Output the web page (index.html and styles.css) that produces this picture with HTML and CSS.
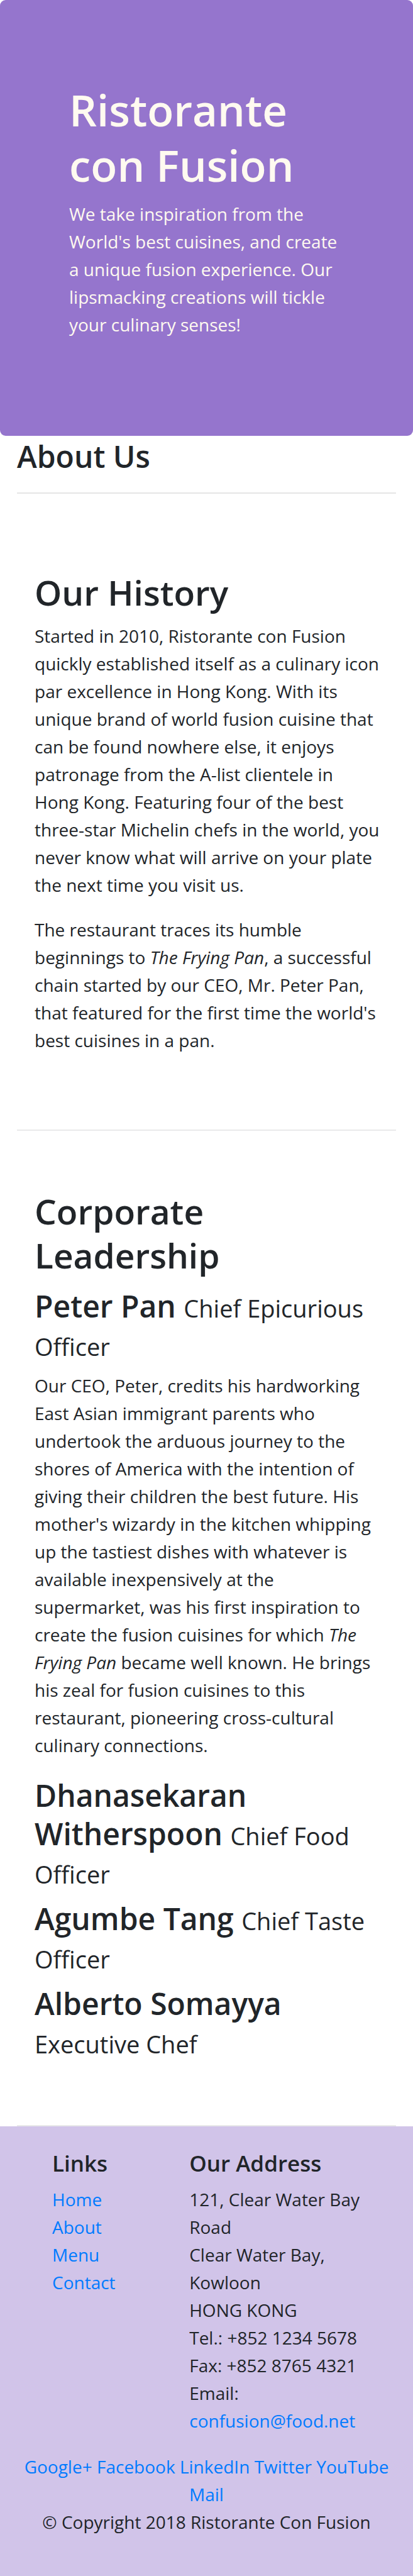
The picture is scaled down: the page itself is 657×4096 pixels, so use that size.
FILE: index.html
```html
<!DOCTYPE html>
<html lang="en">
<head>
<meta charset="utf-8">
<meta name="viewport" content="width=device-width, initial-scale=1">
<title>Ristorante Con Fusion: About Us</title>
<link rel="stylesheet" href="styles.css">
</head>
<body>
<header class="jumbotron">
  <h1>Ristorante con Fusion</h1>
  <p>We take inspiration from the World's best cuisines, and create a unique fusion experience. Our lipsmacking creations will tickle your culinary senses!</p>
</header>
<main class="container">
  <h3 class="page-title">About Us</h3>
  <section class="row-content">
    <h2>Our History</h2>
    <p>Started in 2010, Ristorante con Fusion quickly established itself as a culinary icon par excellence in Hong&nbsp;Kong. With its unique brand of world fusion cuisine that can be found nowhere else, it enjoys patronage from the A-list clientele in Hong&nbsp;Kong. Featuring four of the best three-star Michelin chefs in the world, you never know what will arrive on your plate the next time you visit us.</p>
    <p>The restaurant traces its humble beginnings to <em>The Frying Pan</em>, a successful chain started by our CEO, Mr. Peter Pan, that featured for the first time the world's best cuisines in a pan.</p>
  </section>
  <section class="row-content">
    <h2>Corporate Leadership</h2>
    <h3>Peter Pan <small>Chief Epicurious Officer</small></h3>
    <p>Our CEO, Peter, credits his hardworking East Asian immigrant parents who undertook the arduous journey to the shores of America with the intention of giving their children the best future. His mother's wizardy in the kitchen whipping up the tastiest dishes with whatever is available inexpensively at the supermarket, was his first inspiration to create the fusion cuisines for which <em>The Frying Pan</em> became well known. He brings his zeal for fusion cuisines to this restaurant, pioneering cross-cultural culinary connections.</p>
    <h3>Dhanasekaran Witherspoon <small>Chief Food Officer</small></h3>
    <h3>Agumbe Tang <small>Chief Taste Officer</small></h3>
    <h3>Alberto Somayya <small>Executive Chef</small></h3>
  </section>
</main>
<footer class="footer">
  <div class="footer-columns">
    <nav class="footer-links">
      <h5>Links</h5>
      <ul>
        <li><a href="#">Home</a></li>
        <li><a href="#">About</a></li>
        <li><a href="#">Menu</a></li>
        <li><a href="#">Contact</a></li>
      </ul>
    </nav>
    <div class="footer-address">
      <h5>Our Address</h5>
      <address>
        121, Clear Water Bay Road<br>
        Clear Water Bay, Kowloon<br>
        HONG KONG<br>
        Tel.: +852 1234 5678<br>
        Fax: +852 8765 4321<br>
        Email: <a href="mailto:confusion@food.net">confusion@food.net</a>
      </address>
    </div>
  </div>
  <div class="social">
    <a href="#">Google+</a>
    <a href="#">Facebook</a>
    <a href="#">LinkedIn</a>
    <a href="#">Twitter</a>
    <a href="#">YouTube</a>
    <a href="#">Mail</a>
  </div>
  <p class="copyright">© Copyright 2018 Ristorante Con Fusion</p>
</footer>
</body>
</html>
```
FILE: styles.css
```css
* {
  box-sizing: border-box;
}

body {
  margin: 0;
  background: #fff;
  color: #212529;
  font-family: "Segoe UI", "Open Sans", "Noto Sans", sans-serif;
  font-size: 28px;
  line-height: 44px;
}

h1, h2, h3, h5, p, ul {
  margin: 0;
  padding: 0;
}

h1, h2, h3, h5 {
  font-weight: 600;
}

h1 {
  margin-bottom: 12px;
  font-size: 69px;
  line-height: 88px;
}

h2 {
  margin-bottom: 12px;
  font-size: 55px;
  line-height: 70px;
}

h3 {
  margin-bottom: 13px;
  font-size: 48px;
  line-height: 61px;
}

h2 + h3 {
  margin-top: 15px;
}

h5 {
  margin-bottom: 13px;
  font-size: 35px;
  line-height: 44px;
}

p {
  margin-bottom: 27px;
}

small {
  font-size: 38px;
  font-weight: 400;
  line-height: 1;
}

a {
  color: #007bff;
  text-decoration: none;
}

.jumbotron {
  padding: 130px 110px 128px;
  border-radius: 9px;
  background: #9575cd;
  color: #fffaf0;
}

.container {
  padding: 2px 27px 0;
}

.page-title {
  margin-bottom: 29px;
  padding-bottom: 27px;
  border-bottom: 2px solid #e5e5e5;
}

.row-content {
  padding: 93px 18px 93px 28px;
  border-bottom: 2px solid #e9e9ea;
}

.row-content:last-child {
  padding-bottom: 89px;
}

.footer {
  padding: 37px 27px 64px;
  background: #d1c4e9;
}

.footer-columns {
  display: grid;
  grid-template-columns: 4fr 5fr;
  margin-bottom: 29px;
  padding: 0 56px;
}

.footer-links ul {
  list-style: none;
}

.footer-address address {
  font-style: normal;
}

.social,
.copyright {
  text-align: center;
}

.copyright {
  margin: 0;
}
```
